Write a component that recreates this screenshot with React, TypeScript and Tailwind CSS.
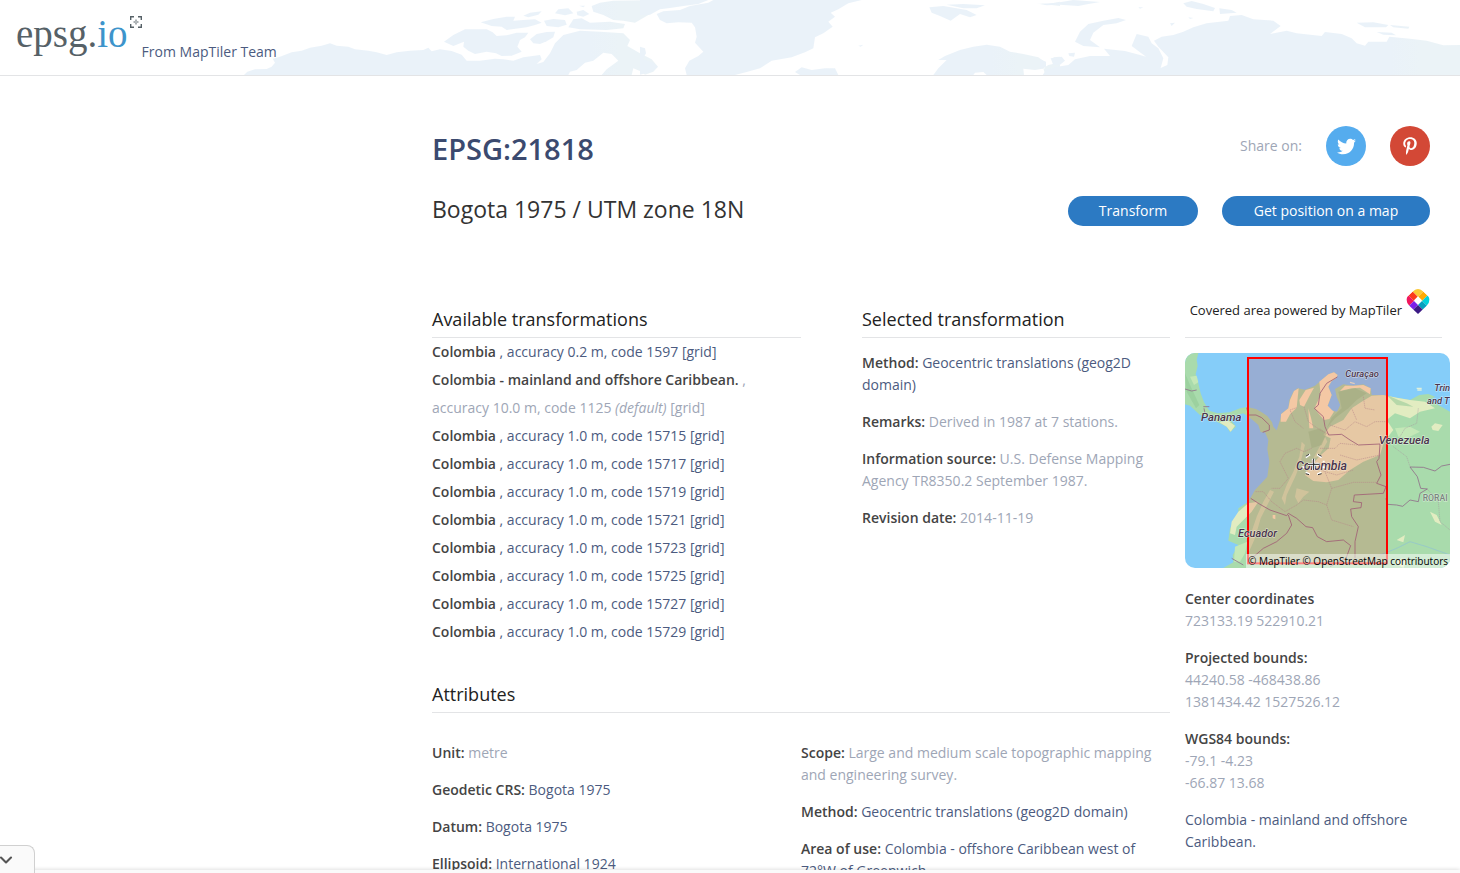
import type { ReactNode } from "react";
import { FaTwitter, FaPinterestP } from "react-icons/fa";
import { ChevronDown } from "lucide-react";

const codes = ["15715", "15717", "15719", "15721", "15723", "15725", "15727", "15729"];

function WorldBackground() {
  return (
    <svg
      className="absolute inset-0 h-full w-full"
      viewBox="0 0 4380 225"
      preserveAspectRatio="xMidYMid slice"
      aria-hidden="true"
    >
      <defs>
        <linearGradient id="land" x1="0" x2="4380" y1="0" y2="0" gradientUnits="userSpaceOnUse">
          <stop offset="0.24" stopColor="#eaf2f9" />
          <stop offset="0.26" stopColor="#ebf3f7" />
          <stop offset="0.54" stopColor="#ebf3f7" />
          <stop offset="0.57" stopColor="#eaf2f9" />
          <stop offset="0.9" stopColor="#eaf2f9" />
          <stop offset="0.93" stopColor="#ebf3f7" />
        </linearGradient>
      </defs>
      <g fill="url(#land)">
        <g transform="translate(720 0)">
          <path d="M12 225L22 215L45 208L80 207L95 200L105 188L98 176L120 170L155 157L185 152L210 143L245 137L270 130L290 137L325 140L345 148L385 152L410 157L440 165L470 157L510 152L550 150L565 143L575 154L600 148L635 153L665 164L680 182L720 182L765 176L790 178L820 182L850 172L900 165L905 178L890 192L910 186L930 160L945 130L970 105L1020 92L1080 95L1150 100L1170 120L1162 138L1200 160L1235 178L1254 200L1240 215L1215 224L1205 215L1180 205L1175 225L1085 225L1100 208L1135 182L1115 162L1090 158L1060 182L1035 188L1010 210L990 215L985 225Z" />
          <path d="M612 125L640 105L675 88L740 88L758 97L770 108L800 106L830 98L865 98L855 112L840 120L832 140L845 155L815 167L785 168L768 160L740 155L705 162L685 152L670 140L672 125L640 138Z" />
          <path d="M870 118L890 102L920 96L945 95L940 112L920 124L900 132L880 130Z" />
          <path d="M722 67L760 57L800 50L825 50L820 62L850 60L885 58L905 68L885 75L860 82L800 90L785 80L755 78Z" />
          <path d="M850 47L870 38L905 34L895 44L865 52ZM945 40L955 28L985 25L1000 40L975 46ZM1010 35L1030 30L1048 42L1030 50L1012 46ZM912 62L940 57L975 60L980 74L955 82L920 78ZM985 82L1000 58L1025 55L1050 68L1110 65L1155 72L1150 85L1100 90L1020 88ZM1055 18L1080 8L1120 2L1260 0L1260 20L1225 45L1185 68L1150 62L1120 60L1090 45L1060 35Z" />
          <path d="M1018 17L1035 17L1030 22Z" />
        </g>
        <g transform="translate(1920 0)">
          <path d="M0 0L205 0L175 12L130 18L90 24L60 28L30 44L0 46ZM50 42L70 34L120 30L150 18L205 8L220 0L665 0L625 10L595 28L572 38L585 50L565 65L578 80L550 100L525 112L520 145L495 157L455 172L395 182L360 205L320 216L285 225L140 225L135 205L148 182L175 168L190 155L165 128L170 110L165 82L155 68L115 67L80 70L60 60Z" />
          <path d="M0 140L15 145L18 160L8 178L40 188L53 200L35 215L0 224ZM465 216L485 202L515 210L555 205L585 205L595 225L480 225ZM655 137L670 134L662 140ZM868 22L910 18L945 24L980 30L1010 45L990 52L960 42L932 62L900 48L875 38ZM920 14L970 12L1035 16L1010 25L970 25ZM1190 10L1225 12L1260 5L1260 18Z" />
          <path d="M880 225L895 205L920 180L895 180L915 168L960 150L1000 140L1040 134L1080 140L1110 155L1150 162L1195 172L1218 188L1215 205L1185 210L1150 206L1152 225L1040 225L1030 216L1005 218L1000 225ZM1260 170L1240 172L1248 190L1225 195L1210 205L1215 222L1260 225Z" />
        </g>
        <g transform="translate(3120 0)">
          <path d="M0 12L50 8L100 0L140 3L180 6L145 12L115 18L60 14L20 16ZM105 125L120 95L145 72L190 62L235 54L258 60L230 70L190 75L160 98L150 120L180 142L130 138ZM430 10L455 3L490 12L525 24L520 34L470 27L440 20ZM538 25L575 30L590 38L540 42ZM950 68L1000 67L1045 75L1038 82L975 82ZM1050 75L1108 80L1105 86L1060 82ZM1010 96L1055 98L1068 106L1030 104ZM85 160L105 158L102 170L88 168Z" />
          <path d="M8 225L20 208L52 200L85 195L105 178L150 168L210 168L192 146L255 153L300 165L318 170L275 138L290 102L325 110L335 130L355 145L370 175L362 204L382 195L385 172L355 140L342 122L365 110L400 105L430 95L460 82L500 70L565 62L570 48L605 45L640 58L700 62L722 78L690 102L740 92L770 100L845 108L855 96L905 102L935 115L950 130L975 137L985 125L1040 125L1048 110L1110 116L1160 122L1210 136L1260 135L1260 225Z" />
          <path d="M0 178L18 185L18 200L0 208ZM32 175L65 170L75 182L60 194L40 196ZM295 22L310 22L300 26ZM390 70L405 68L395 78ZM445 52L460 54L450 57Z" />
        </g>
      </g>
    </svg>
  );
}

function Logo() {
  return (
    <a href="#home" aria-label="epsg.io" className="relative flex pr-3.5 font-['Liberation_Serif',serif] text-[39px] leading-[44px] font-normal text-[#566167]">
      epsg.<span className="text-[#3d94cb]">io</span>
      <svg className="absolute top-1 right-0 h-3 w-3" viewBox="0 0 12 12" fill="none" stroke="#566167" aria-hidden="true">
        <path d="M.7 4V.7H4M8 .7h3.300V4M11.300 8v3.300H8M4 11.300H.7V8" strokeWidth="1.4" />
        <path d="M6 3.500v2M6 6.500v2M3.500 6h2M6.500 6h2" strokeWidth="1" />
      </svg>
    </a>
  );
}

function MapTilerMark() {
  return (
    <svg className="h-[25px] w-6" viewBox="0 0 72 75" aria-hidden="true">
      <defs>
        <clipPath id="pin">
          <path d="M36 75L10 50Q-4 35 5 22L22 6Q36-6 50 6L67 22Q76 35 62 50Z" />
        </clipPath>
      </defs>
      <g clipPath="url(#pin)">
        <g transform="translate(36 35) rotate(45)">
          <rect x="-31" y="-31" width="23" height="23" fill="#fbc935" />
          <rect x="-8" y="-31" width="17" height="23" fill="#ffaa01" />
          <rect x="9" y="-31" width="24" height="23" fill="#00d1da" />
          <rect x="-31" y="-8" width="23" height="17" fill="#fb3a1b" />
          <rect x="9" y="-8" width="24" height="17" fill="#05a0be" />
          <rect x="-31" y="9" width="23" height="24" fill="#f1175d" />
          <rect x="-8" y="9" width="17" height="24" fill="#7a1fea" />
          <rect x="9" y="9" width="24" height="24" fill="#3b1a85" />
        </g>
      </g>
      <path d="M36 22L48 34L36 46L24 34Z" fill="#fff" />
    </svg>
  );
}

function CoverageMap() {
  return (
    <div className="relative overflow-hidden rounded-[10px]">
      <svg className="block w-full" viewBox="15 24 795 645" role="img" aria-label="Covered area">
        <rect x="15" y="24" width="795" height="645" fill="#85cdf9" />
        <path
          fill="#a9dbac"
          d="M15 24H55L50 45L53 62L47 88L55 115L62 145L72 172L88 197L112 205L150 202L180 190L202 186L228 192L245 202L262 213L276 232L280 245L290 256L300 225L305 205L325 190L328 165L340 140L352 130L375 134L405 122L425 105L445 88L462 82L473 90L468 100L455 108L445 125L455 150L443 182L455 196L470 200L480 180L470 155L465 132L490 118L520 122L550 118L572 130L575 150L610 150L650 158L690 165L718 150L745 147L765 155L750 165L775 180L810 200V669H130L160 652L158 630L175 600L145 587L150 550L175 510L175 490L205 470L225 435L262 395L268 350L262 312L265 285L255 262L242 262L235 240L218 225L190 205L165 212L152 225L168 245L150 262L140 245L110 230L85 215L60 210L30 182L15 178Z"
        />
        <g fill="#f2ebc1">
          <path d="M325 190L330 165L342 138L356 130L353 160L350 188L330 208L318 230L302 230L303 208ZM358 165L377 135L402 128L390 150L372 185L360 180ZM418 110L445 88L462 82L473 90L468 100L455 108L445 125L455 150L443 182L462 200L448 222L432 225L415 205L404 188L422 150ZM385 190L393 218L400 250L388 250ZM495 122L520 122L550 120L572 130L570 148L540 128L515 130L480 138ZM278 510L286 510L286 523L278 520Z" />
        </g>
        <g fill="#e2ecc1">
          <path d="M610 150L575 152L545 170L515 190L490 225L450 245L430 270L452 280L446 310L420 332L390 365L375 390L400 408L440 412L475 405L510 375L550 350L600 330L612 290L640 255L620 225L645 205L690 220L720 200L765 190L735 170L690 165L650 158Z" />
          <path d="M365 290L375 300L362 350L348 390L320 450L315 480L305 460L320 420L340 380L358 335ZM270 435L282 440L262 480L242 520L225 580L205 625L208 580L230 515L250 470ZM400 340L435 275L442 290L415 335ZM350 430L388 440L370 455L355 475L345 455Z" opacity=".55" />
          <path d="M175 500L205 475L235 470L215 500L170 545L165 570L150 565L155 530ZM118 232L145 228L165 242L152 260L140 245ZM754 245L765 235L788 240L775 258L758 255ZM750 500L770 510L785 540L765 530ZM650 585L675 570L670 592ZM665 640L680 645L670 669L645 655Z" />
        </g>
        <path fill="#c4e8b7" d="M645 250L690 245L720 260L680 280L655 275ZM165 605L202 590L195 625L180 650L162 650ZM30 95L50 92L55 112L42 120Z" />
        <path fill="#91c995" d="M475 140L525 130L560 145L530 165L505 190L465 220L440 250L455 218L485 190ZM620 150L655 165L680 175L700 185L650 180ZM385 260L420 250L440 265L425 300L395 310ZM15 85L30 120L58 180L48 190L20 140Z" opacity=".55" />
        <path fill="#85cdf9" d="M462 145L470 160L480 180L472 198L457 196L446 182L456 165Z" />
        <g fill="none" stroke="#a899a1" strokeWidth="1.500" strokeDasharray="4 2">
          <path d="M350 188L330 195L345 230L370 250M372 185L385 230L420 255L448 268M395 310L372 320L350 310L315 325L300 350L325 400L300 430L275 430M420 310L465 310L480 295L530 300M400 365L435 380L455 430L440 480L415 470L370 465L350 480L315 500L275 470L250 440L225 440M435 380L470 390L520 375M440 480L455 525L520 545M455 430L520 412L590 412M450 240L495 255L525 230L560 245L585 230L620 230M515 190L530 225M550 155L555 190L585 195M715 190L710 235L675 250L660 275M640 305L680 335L690 365M740 430L775 470L780 530L810 555M600 330L530 345L480 330" />
        </g>
        <g fill="none" stroke="#90708a" strokeWidth="2.500">
          <path d="M472 96L440 115L420 145L415 180L403 190L430 215L435 245L446 270L485 268L510 285L535 300L600 297L597 340L590 350L603 390L590 415L618 425L610 445L523 450L520 470L545 473L543 488L512 492L515 515L535 545L525 590L525 640M618 460L622 478L650 480L668 484L690 465L715 470L720 445L742 432L722 430L712 395L690 366L730 367L765 378L785 363L810 358M212 460L240 478L270 495L320 512L325 505L350 520L378 545L398 548L412 575L440 590L490 585L512 602L498 640L450 665M325 510L335 540L320 565L290 590L250 610L215 640M200 188L205 210L228 210L245 218L268 240L268 255L248 262M15 132L35 138L50 135M70 185L88 185M72 190L75 205M155 640L190 660" />
        </g>
        <path d="M600 630L650 610L690 590L740 605L810 630" fill="none" stroke="#8fc0d5" strokeWidth="2" />
        <path d="M710 130H725M712 135H725M510 112L524 116" stroke="#def0db" strokeWidth="4" />
        <rect x="204" y="39" width="417" height="616" fill="#ff0000" fillOpacity=".15" stroke="#ff0000" strokeWidth="6" />
        <g className="font-[Roboto,sans-serif] font-medium italic" fill="#49344b" stroke="#fff" strokeOpacity=".6" strokeWidth="3" paintOrder="stroke">
          <text x="496" y="96" fontSize="28">Curaçao</text>
          <text x="63" y="228" fontSize="34">Panama</text>
          <text x="596" y="297" fontSize="34">Venezuela</text>
          <text x="348" y="374" fontSize="37">Colombia</text>
          <text x="174" y="577" fontSize="33">Ecuador</text>
          <text x="763" y="137" fontSize="28">Trin</text>
          <text x="741" y="176" fontSize="28">and T</text>
        </g>
        <text x="728" y="467" fontSize="26" fill="#7b8580" stroke="#fff" strokeOpacity=".5" strokeWidth="3" paintOrder="stroke" className="font-[Roboto,sans-serif] font-medium">RORAI</text>
        <g fill="none">
          <path d="M377 337L390 328M412 328L425 337M431 347V352M431 364V370M424 382L412 388M389 388L377 382M370 370V364" stroke="#fff" strokeWidth="6" />
          <path d="M377 334L387 328M414 328L425 334M377 386L387 389M414 389L425 386" stroke="#333" strokeWidth="3" />
          <path d="M401 341V375M384 358H418" stroke="#fff" strokeWidth="8" />
          <path d="M401 341V375M384 358H418" stroke="#222" strokeWidth="3" />
        </g>
      </svg>
      <p className="absolute right-0 bottom-0 bg-white/50 px-0.5 text-[10px] leading-[14px] whitespace-nowrap text-black">
        <a href="#maptiler">© MapTiler</a> <a href="#osm">© OpenStreetMap contributors</a>
      </p>
    </div>
  );
}

function Heading({ children }: { children: ReactNode }) {
  return <h3 className="border-b border-[#e3e4e6] pb-1.5 text-lg leading-6 font-normal text-[#222]">{children}</h3>;
}

function Field({ label, href, children }: { label: string; href?: string; children: ReactNode }) {
  return (
    <p>
      <strong className="font-semibold text-[#444]">{label}</strong>{" "}
      {href ? <a href={href} className="text-[#4c5b80]">{children}</a> : children}
    </p>
  );
}

function Transformation({ accuracy, code }: { accuracy: string; code: string }) {
  return (
    <li>
      <a href={"#" + code} className="text-[#4c5b80]">
        <strong className="font-semibold text-[#444]">Colombia</strong> , accuracy {accuracy} m, code {code} [grid]
      </a>
    </li>
  );
}

export default function App() {
  return (
    <div className="relative flex h-screen flex-col overflow-hidden bg-white font-['Open_Sans',sans-serif] text-sm leading-[22px] font-normal text-[#9ea6b6]">
      <header className="relative shrink-0 border-b border-[#e3e4e6]">
        <WorldBackground />
        <div className="relative flex h-[75px] items-start pt-3 pl-4">
          <Logo />
          <a href="#team" className="pt-[29px] text-[#4c5b80]">From MapTiler Team</a>
        </div>
      </header>

      <main className="min-h-0 flex-1 overflow-hidden pl-[432px]">
        <section className="flex justify-between pt-[50px] pr-[30px]">
          <div>
            <h1 className="text-[29px] leading-[46px] font-semibold text-[#3b4a6f]">EPSG:21818</h1>
            <h2 className="mt-5 text-[23px] leading-[34px] font-normal text-[#333]">Bogota 1975 / UTM zone 18N</h2>
          </div>
          <div className="flex flex-col items-end gap-[30px]">
            <div className="flex items-center gap-6">
              <span>Share on:</span>
              <a href="#twitter" aria-label="Twitter" className="flex size-10 items-center justify-center rounded-full bg-[#55acee] text-white">
                <FaTwitter size={19} />
              </a>
              <a href="#pinterest" aria-label="Pinterest" className="flex size-10 items-center justify-center rounded-full bg-[#d34836] text-white">
                <FaPinterestP size={18} />
              </a>
            </div>
            <div className="flex gap-6 text-white">
              <a href="#transform" className="flex h-[30px] w-[130px] items-center justify-center rounded-full bg-[#2c7ac3]">Transform</a>
              <a href="#map" className="flex h-[30px] w-52 items-center justify-center rounded-full bg-[#2c7ac3]">Get position on a map</a>
            </div>
          </div>
        </section>

        <div className="flex gap-[15px] pt-[61px] pr-2.5">
          <div className="min-w-0 flex-1 pt-5">
            <div className="flex gap-[61px]">
              <section className="w-1/2">
                <Heading>Available transformations</Heading>
                <ul className="leading-7">
                  <Transformation accuracy="0.2" code="1597" />
                  <li>
                    <strong className="font-semibold text-[#444]">Colombia - mainland and offshore Caribbean.</strong> ,<br />
                    accuracy 10.0 m, code 1125 <i>(default)</i> [grid]
                  </li>
                  {codes.map((code) => (
                    <Transformation key={code} accuracy="1.0" code={code} />
                  ))}
                </ul>
              </section>
              <section className="flex-1">
                <Heading>Selected transformation</Heading>
                <div className="flex flex-col gap-[15px] pt-3.5">
                  <Field label="Method:" href="#method">Geocentric translations (geog2D domain)</Field>
                  <Field label="Remarks:">Derived in 1987 at 7 stations.</Field>
                  <Field label="Information source:">U.S. Defense Mapping Agency TR8350.2 September 1987.</Field>
                  <Field label="Revision date:">2014-11-19</Field>
                </div>
              </section>
            </div>

            <section className="pt-9">
              <Heading>Attributes</Heading>
              <div className="grid grid-cols-2 pt-[29px]">
                <div className="flex flex-col gap-[15px]">
                  <Field label="Unit:">metre</Field>
                  <Field label="Geodetic CRS:" href="#crs">Bogota 1975</Field>
                  <Field label="Datum:" href="#datum">Bogota 1975</Field>
                  <Field label="Ellipsoid:" href="#ellipsoid">International 1924</Field>
                </div>
                <div className="flex flex-col gap-[15px]">
                  <Field label="Scope:">Large and medium scale topographic mapping and engineering survey.</Field>
                  <Field label="Method:" href="#method">Geocentric translations (geog2D domain)</Field>
                  <Field label="Area of use:" href="#area">Colombia - offshore Caribbean west of 72°W of Greenwich.</Field>
                </div>
              </div>
            </section>
          </div>

          <aside className="w-[265px] shrink-0">
            <a href="#maptiler" className="mr-2 flex h-[51px] items-start justify-end gap-1 border-b border-[#e3e4e6] pr-3 text-[13px] text-[#222]">
              <span className="pt-3">Covered area powered by MapTiler</span>
              <span className="pt-0.5"><MapTilerMark /></span>
            </a>
            <div className="pt-[15px] pb-5">
              <CoverageMap />
            </div>
            <div className="flex flex-col gap-[15px]">
              <p><strong className="font-semibold text-[#444]">Center coordinates</strong><br />723133.19 522910.21</p>
              <p><strong className="font-semibold text-[#444]">Projected bounds:</strong><br />44240.58 -468438.86<br />1381434.42 1527526.12</p>
              <p><strong className="font-semibold text-[#444]">WGS84 bounds:</strong><br />-79.1 -4.23<br />-66.87 13.68</p>
              <p><a href="#area" className="text-[#4c5b80]">Colombia - mainland and offshore Caribbean.</a></p>
            </div>
          </aside>
        </div>
      </main>

      <footer className="relative h-[3px] shrink-0 bg-[#fafafa] shadow-[0_0_4px_rgba(0,0,0,0.2)]" />
      <button type="button" aria-label="Toggle panel" className="absolute bottom-0 left-0 flex h-7 w-[35px] items-center rounded-tr-lg border-t border-r border-[#d0d0d0] bg-[#fafafa] text-[#555]">
        <ChevronDown className="-ml-1" size={20} strokeWidth={2.500} />
      </button>
    </div>
  );
}
